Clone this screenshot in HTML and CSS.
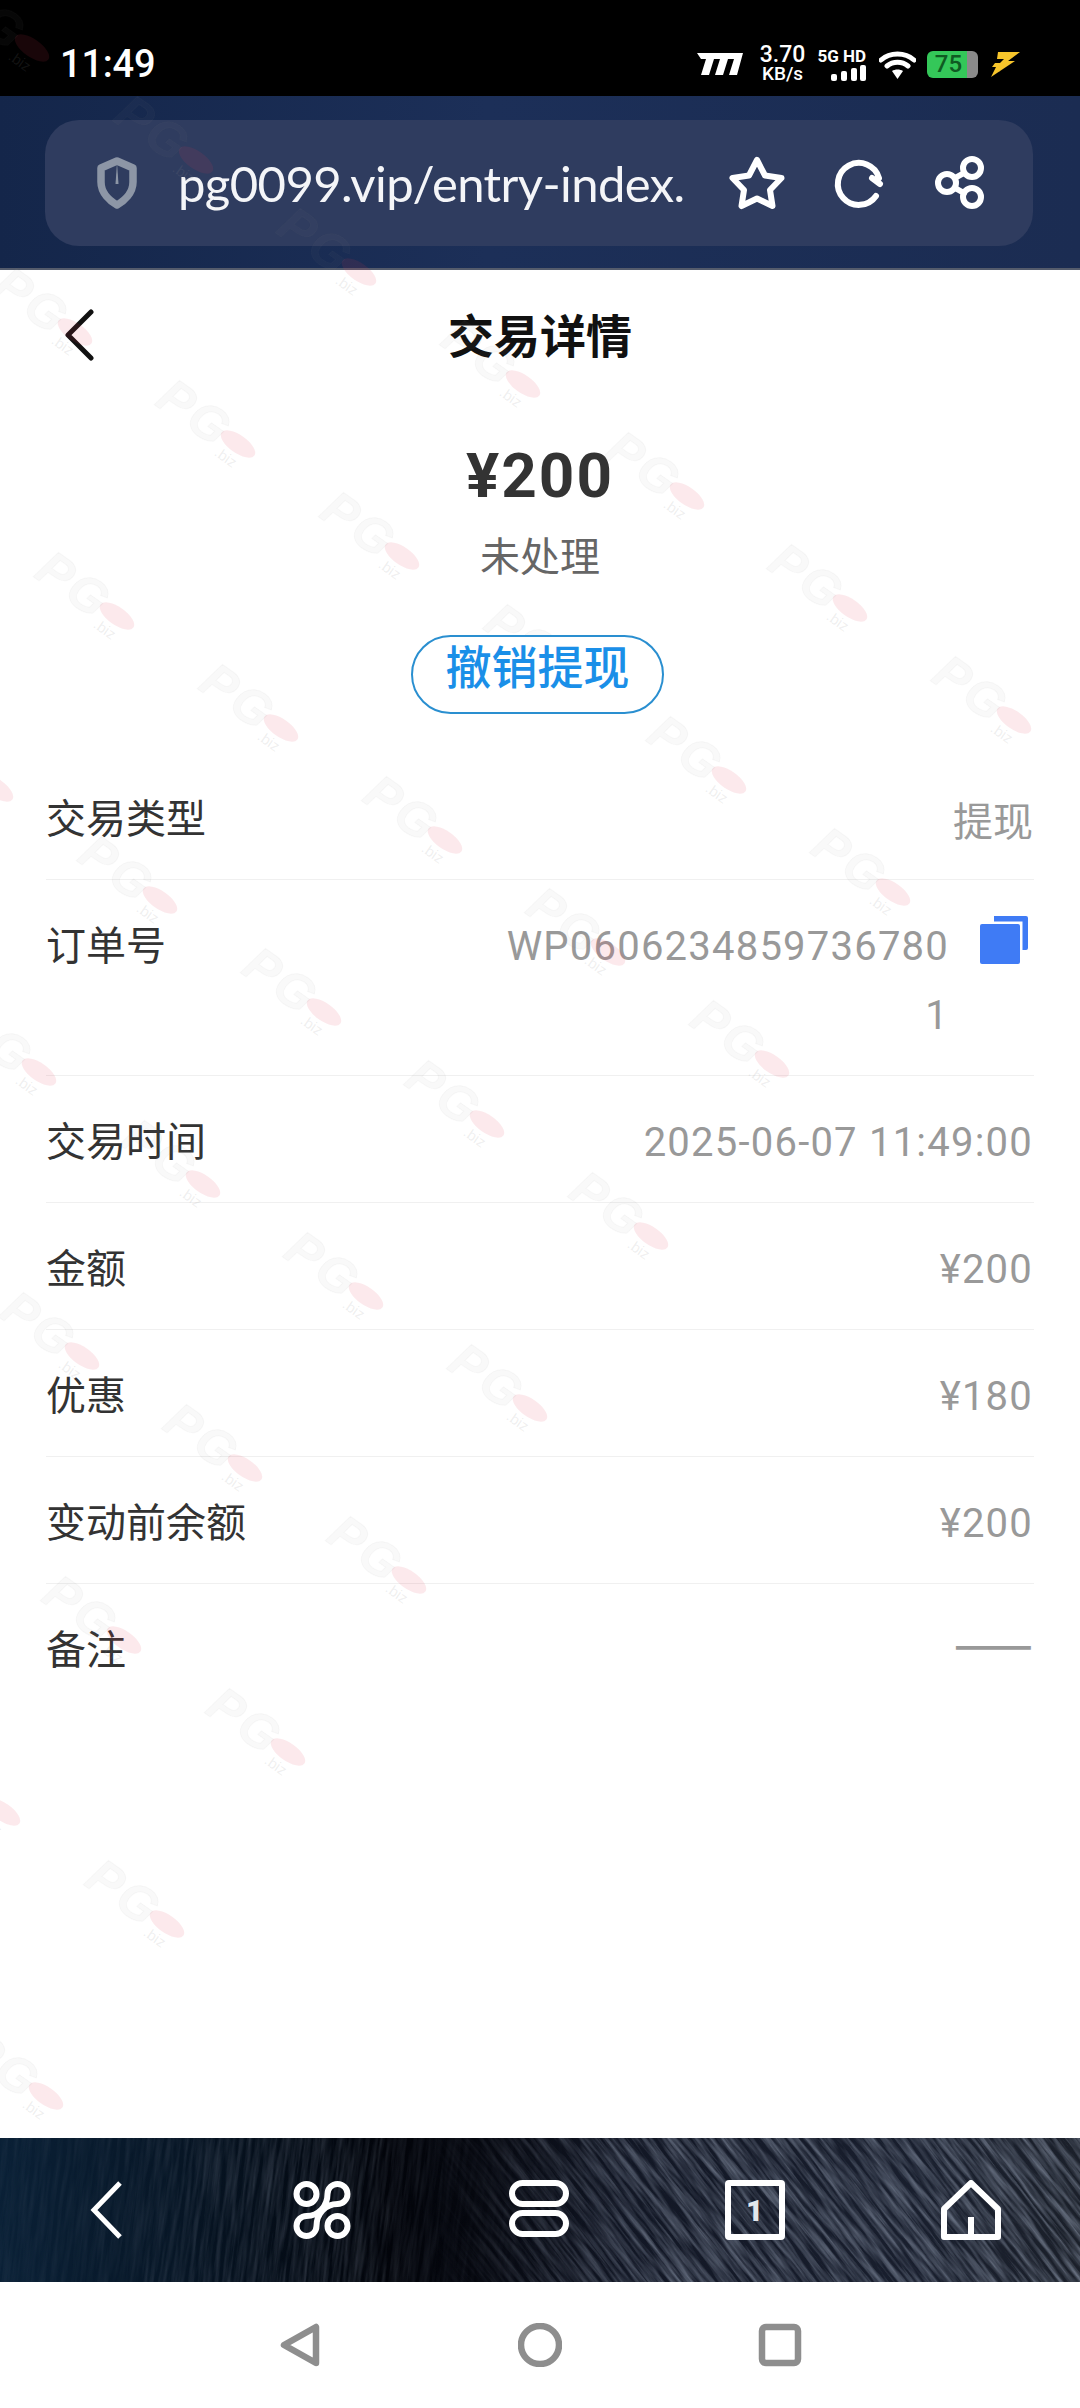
FILE: index.html
```html
<!DOCTYPE html><html lang="zh-CN">
<head>
  <meta charset="UTF-8">
  <meta name="viewport" content="width=device-width, initial-scale=1.0">
  <title>交易详情</title>
  <link rel="stylesheet" href="styles.css">
</head>
<body>
  <div class="status">
    <span class="clock">11:49</span>
    <div class="status-icons">
      <svg class="logo-m" viewBox="0 0 46 22"><path d="M0 0H46L40 22H32L37 6H31L26 22H18L23 6H17L12 22H4L9 6H4Z"/></svg>
      <div class="speed"><span class="speed-num">3.70</span><span class="speed-unit">KB/s</span></div>
      <div class="signal">
        <span class="signal-label">5G HD</span>
        <svg class="signal-bars" viewBox="0 0 35 16"><rect x="0" y="9" width="6" height="7" rx="2"/><rect x="10" y="6" width="6" height="10" rx="2"/><rect x="20" y="3" width="6" height="13" rx="2"/><rect x="29" y="0" width="6" height="16" rx="2"/></svg>
      </div>
      <svg class="wifi" viewBox="0 0 37 29"><path class="wifi-arc" d="M2 10C11 2 26 2 35 10M8 16C14 11 23 11 29 16"/><path class="wifi-fill" d="M13 21C16 19 21 19 24 21L18.500 29Z"/></svg>
      <div class="battery"><span class="battery-level">75</span></div>
      <svg class="bolt" viewBox="0 0 29 25"><path d="M7 0H29L17 9H24L0 25L5 15H1L4 11H9L13 7H6ZM6 14L17 10L8 20Z"/></svg>
    </div>
  </div>

  <div class="browser">
    <div class="url-box">
      <svg class="shield" viewBox="0 0 40 52"><path class="shield-line" d="M20 4L36 11V25C36 36 27 44 20 48C13 44 4 36 4 25V11Z"/><path class="shield-spike" d="M20 6L21.500 27H18.500Z"/></svg>
      <span class="url">pg0099.vip/entry-index.</span>
      <svg class="url-icon star" viewBox="0 0 56 54"><path d="M28 4L36 19.500L52.500 22L41 34L43.500 50L28 42.500L12.500 50L15 34L3.500 22L20 19.500Z"/></svg>
      <svg class="url-icon reload" viewBox="0 0 56 56"><path d="M45 41A21 21 0 1 1 48 23M41 23L49 29"/></svg>
      <svg class="url-icon share" viewBox="0 0 56 56"><circle cx="16" cy="28" r="9"/><circle cx="41" cy="13" r="9"/><circle cx="41" cy="42" r="9"/><path d="M24 23L33 18M24 33L33 38"/></svg>
    </div>
  </div>

  <main class="page">
    <header class="page-head">
      <svg class="back" viewBox="0 0 32 52"><path d="M28 3L5 26L28 49"/></svg>
      <h1>交易详情</h1>
      <span></span>
    </header>

    <div class="summary">
      <div class="amount">¥200</div>
      <div class="state">未处理</div>
      <button class="cancel">撤销提现</button>
    </div>

    <div class="rows">
      <div class="row"><span class="label">交易类型</span><span class="value value-cjk">提现</span></div>
      <div class="row">
        <span class="label">订单号</span>
        <div class="order">
          <span class="value order-no">WP06062348597367801</span>
          <svg class="copy" viewBox="0 0 48 48"><path class="copy-back" d="M14 0H46A2 2 0 0 1 48 2V32A2 2 0 0 1 46 34H42.500V5.500H14Z"/><rect class="copy-front" x="0" y="8" width="40" height="40" rx="2"/></svg>
        </div>
      </div>
      <div class="row"><span class="label">交易时间</span><span class="value">2025-06-07 11:49:00</span></div>
      <div class="row"><span class="label">金额</span><span class="value">¥200</span></div>
      <div class="row"><span class="label">优惠</span><span class="value">¥180</span></div>
      <div class="row"><span class="label">变动前余额</span><span class="value">¥200</span></div>
      <div class="row"><span class="label">备注</span><span class="value dash">——</span></div>
    </div>
  </main>

  <nav class="tabbar">
    <svg class="fibers" viewBox="0 0 1080 144" preserveAspectRatio="none">
      <defs>
        <filter id="fiber" x="0" y="0" width="100%" height="100%">
          <feTurbulence type="fractalNoise" baseFrequency="0.016 0.24" numOctaves="4" seed="7"/>
          <feColorMatrix values="0 0 0 0 0.3  0 0 0 0 0.35  0 0 0 0 0.45  1.2 0 0 0 -0.4"/>
        </filter>
        <linearGradient id="fadeRight" x1="0" x2="1" y1="0" y2="0">
          <stop offset="0.4" stop-color="#000"/><stop offset="0.62" stop-color="#fff"/>
        </linearGradient>
        <linearGradient id="fadeLeft" x1="0" x2="1" y1="0" y2="0">
          <stop offset="0.08" stop-color="#222"/><stop offset="0.3" stop-color="#777"/><stop offset="0.44" stop-color="#111"/><stop offset="0.6" stop-color="#000"/>
        </linearGradient>
        <mask id="maskRight" maskUnits="userSpaceOnUse" x="0" y="0" width="1080" height="144"><rect width="1080" height="144" fill="url(#fadeRight)"/></mask>
        <mask id="maskLeft" maskUnits="userSpaceOnUse" x="0" y="0" width="1080" height="144"><rect width="1080" height="144" fill="url(#fadeLeft)"/></mask>
      </defs>
      <g mask="url(#maskRight)"><rect x="-200" y="-900" width="2000" height="2000" filter="url(#fiber)" transform="rotate(52 800 72)"/></g>
      <g mask="url(#maskLeft)"><rect x="-800" y="-900" width="2000" height="2000" filter="url(#fiber)" transform="rotate(97 250 72)"/></g>
    </svg>
    <svg class="tab-icon tab-back" viewBox="0 0 60 60"><path d="M44 3L18 30L44 57"/></svg>
    <svg class="tab-icon" viewBox="0 0 60 60"><g transform="translate(2.500 2)"><circle cx="12" cy="12" r="10"/><circle cx="43" cy="44" r="10"/><path d="M33 12A10 10 0 1 1 43 22C31 22 22 32 22 44A10 10 0 1 1 12 34C24 34 33 24 33 12Z"/></g></svg>
    <svg class="tab-icon" viewBox="0 0 60 60"><rect x="3" y="3" width="54" height="21" rx="10.500"/><rect x="3" y="33" width="54" height="21" rx="10.500"/></svg>
    <div class="tab-count"><span>1</span></div>
    <svg class="tab-icon" viewBox="0 0 60 60"><path d="M30 3L57 29V57H3V29ZM30 37V57"/></svg>
  </nav>

  <div class="sysnav">
    <svg class="sys-icon" viewBox="0 0 44 44"><path d="M38 4V40L6 22Z"/></svg>
    <svg class="sys-icon" viewBox="0 0 44 44"><circle cx="22" cy="22" r="19"/></svg>
    <svg class="sys-icon" viewBox="0 0 44 44"><rect x="4" y="4" width="36" height="36" rx="4"/></svg>
  </div>

  <svg class="watermark" viewBox="0 0 1080 2138">
    <defs>
      <g id="mark">
        <g transform="rotate(35)">
          <text class="mark-pg" x="-92" y="16">PG</text>
          <text class="mark-biz" x="-14" y="23">.biz</text>
          <ellipse class="mark-dot" cx="0" cy="0" rx="20" ry="9"/>
        </g>
      </g>
    </defs>
    <use href="#mark" x="32" y="48"/><use href="#mark" x="196" y="160"/><use href="#mark" x="359" y="272"/><use href="#mark" x="523" y="384"/><use href="#mark" x="687" y="496"/><use href="#mark" x="850" y="608"/><use href="#mark" x="1014" y="720"/>
    <use href="#mark" x="75" y="332"/><use href="#mark" x="238" y="444"/><use href="#mark" x="402" y="556"/><use href="#mark" x="566" y="668"/><use href="#mark" x="729" y="780"/><use href="#mark" x="893" y="892"/>
    <use href="#mark" x="117" y="616"/><use href="#mark" x="281" y="728"/><use href="#mark" x="445" y="840"/><use href="#mark" x="608" y="952"/><use href="#mark" x="772" y="1064"/>
    <use href="#mark" x="-4" y="788"/><use href="#mark" x="160" y="900"/><use href="#mark" x="324" y="1012"/><use href="#mark" x="487" y="1124"/><use href="#mark" x="651" y="1236"/>
    <use href="#mark" x="39" y="1072"/><use href="#mark" x="203" y="1184"/><use href="#mark" x="366" y="1296"/><use href="#mark" x="530" y="1408"/>
    <use href="#mark" x="82" y="1356"/><use href="#mark" x="245" y="1468"/><use href="#mark" x="409" y="1580"/>
    <use href="#mark" x="-40" y="1528"/><use href="#mark" x="124" y="1640"/><use href="#mark" x="288" y="1752"/>
    <use href="#mark" x="3" y="1812"/><use href="#mark" x="167" y="1924"/>
    <use href="#mark" x="46" y="2096"/>
  </svg>
</body>
</html>
```

FILE: styles.css
```css
* { box-sizing: border-box; }
html, body { margin: 0; padding: 0; }
body { width: 1080px; height: 2408px; position: relative; display: flex; flex-direction: column; overflow: hidden; background: #fff; font-family: Roboto, "Noto Sans CJK SC", sans-serif; }

/* status bar */
.status { height: 96px; flex: none; background: #000; color: #fff; display: flex; align-items: center; justify-content: space-between; padding: 32px 60px 0; }
.clock { font-size: 38px; font-weight: 500; letter-spacing: -0.2px; }
.status-icons { display: flex; align-items: center; }
.logo-m { width: 46px; height: 22px; fill: #fff; margin-right: 17px; }
.speed { display: flex; flex-direction: column; align-items: center; width: 45px; font-weight: 500; line-height: 18px; margin-right: 13px; }
.speed-num { font-size: 23px; line-height: 20px; }
.speed-unit { font-size: 19px; }
.signal { display: flex; flex-direction: column; align-items: flex-end; width: 48px; margin-right: 13px; }
.signal-label { font-size: 17px; font-weight: 700; line-height: 17px; white-space: nowrap; }
.signal-bars { width: 35px; height: 16px; fill: #fff; }
.wifi { width: 37px; height: 29px; margin-right: 11px; }
.wifi-arc { fill: none; stroke: #fff; stroke-width: 5; stroke-linecap: round; }
.wifi-fill { fill: #fff; }
.battery { width: 51px; height: 27px; border-radius: 6px; background: linear-gradient(90deg, #34c759 0, #34c759 78%, #8a8a8a 78%, #8a8a8a 100%); margin-right: 13px; display: flex; justify-content: center; }
.battery-level { color: #0f5a22; font-size: 24px; font-weight: 500; line-height: 27px; padding-right: 8px; }
.bolt { width: 29px; height: 25px; fill: #f7c52b; }

/* browser bar */
.browser { height: 174px; flex: none; background: linear-gradient(90deg, #14264a, #1c2f58 45%, #1b2c52); border-bottom: 2px solid #555c6c; padding: 24px 47px 22px 45px; }
.url-box { height: 126px; border-radius: 34px; background: #2f3c5f; display: flex; align-items: center; padding-left: 51px; }
.shield { width: 42px; height: 52px; margin-right: 40px; flex: none; }
.shield-line { fill: none; stroke: #8d96a6; stroke-width: 7.500; stroke-linejoin: round; }
.shield-spike { fill: #8d96a6; }
.url { width: 551px; flex: none; color: #f4f5f8; font-family: Lato, sans-serif; font-size: 49px; font-weight: 400; letter-spacing: -0.6px; white-space: nowrap; }
.url-icon { fill: none; stroke: #fff; stroke-width: 6; stroke-linecap: round; stroke-linejoin: round; flex: none; width: 56px; height: 56px; }
.star { margin-right: 46px; }
.reload { margin-right: 44px; }

/* page */
.page { flex: 1; background: #fff; }
.page-head { height: 130px; display: grid; grid-template-columns: 1fr auto 1fr; align-items: center; padding: 0 63px; }
.back { width: 32px; height: 52px; fill: none; stroke: #111; stroke-width: 5; stroke-linecap: round; stroke-linejoin: round; }
.page-head h1 { margin: 0; padding-bottom: 5px; font-family: "Noto Sans CJK SC", sans-serif; font-size: 46px; font-weight: 700; color: #111; }
.summary { display: flex; flex-direction: column; align-items: center; padding-top: 36px; }
.amount { font-size: 62px; font-weight: 700; line-height: 80px; letter-spacing: 2px; color: #333; }
.state { font-family: "Noto Sans CJK SC", sans-serif; font-size: 40px; line-height: 56px; color: #666; margin-top: 10px; }
.cancel { position: relative; z-index: 2; width: 253px; height: 79px; margin: 53px 5px 0 0; padding: 0 0 21px; border: 2px solid #2a8fd0; border-radius: 40px; background: #fff; color: #1a8fe8; font-family: "Noto Sans CJK SC", sans-serif; font-size: 46px; font-weight: 500; line-height: 40px; }

.rows { margin: 39px 46px 0; }
.row { display: flex; justify-content: space-between; padding: 29px 1px 28px 0; border-bottom: 1px solid #f0f0f0; font-size: 40px; line-height: 69px; }
.row:last-child { border-bottom: none; }
.label { font-family: "Noto Sans CJK SC", sans-serif; color: #333; }
.value { padding-top: 3px; margin-bottom: -3px; font-weight: 400; letter-spacing: 1.22px; color: #999; }
.value-cjk { font-family: "Noto Sans CJK SC", sans-serif; letter-spacing: 0; }
.order { display: flex; align-items: flex-start; }
.order-no { width: 446px; text-align: right; word-break: break-all; margin-right: 31px; }
.copy { width: 48px; height: 48px; margin: 7px 5px 0 0; }
.copy-back, .copy-front { fill: #3f7bf5; }
.dash { padding-top: 0; margin: -7px 0 0; font-family: "Noto Sans CJK SC", sans-serif; letter-spacing: 0; font-size: 47px; font-weight: 500; }

/* bottom bars */
.tabbar { height: 144px; flex: none; position: relative; display: flex; align-items: center; justify-content: space-between; padding: 0 79px 0 76px; background: linear-gradient(90deg, #0a2036 0, #071626 16%, #02040a 36%, #05070e 44%, #121725 58%, #191f2e 85%, #1b202a 100%); }
.fibers { position: absolute; left: 0; top: 0; width: 100%; height: 100%; }
.tab-icon { position: relative; width: 60px; height: 60px; fill: none; stroke: #fff; stroke-width: 6; stroke-linejoin: round; }
.tab-back { stroke-linejoin: miter; stroke-width: 5; }
.tab-count { position: relative; width: 60px; height: 60px; border: 6px solid #fff; border-radius: 4px; color: #e2e7ec; display: flex; align-items: center; justify-content: center; font-size: 30px; font-weight: 900; }
.sysnav { height: 126px; flex: none; background: #fff; display: flex; align-items: center; justify-content: center; gap: 196px; }
.sys-icon { width: 44px; height: 44px; fill: none; stroke: #8e8e8e; stroke-width: 6.500; stroke-linejoin: round; }

/* watermark over the page */
.watermark { position: absolute; left: 0; top: 0; width: 1080px; height: 2138px; z-index: 1; pointer-events: none; }
.mark-pg { font-family: "Liberation Sans", sans-serif; font-size: 50px; font-weight: 700; font-style: italic; letter-spacing: 3px; fill: #8a8a8a; fill-opacity: 0.05; stroke: #8a8a8a; stroke-opacity: 0.05; }
.mark-biz { font-family: "Liberation Sans", sans-serif; font-size: 15px; fill: #8a8a8a; fill-opacity: 0.14; }
.mark-dot { fill: #e63a50; fill-opacity: 0.11; }
```
